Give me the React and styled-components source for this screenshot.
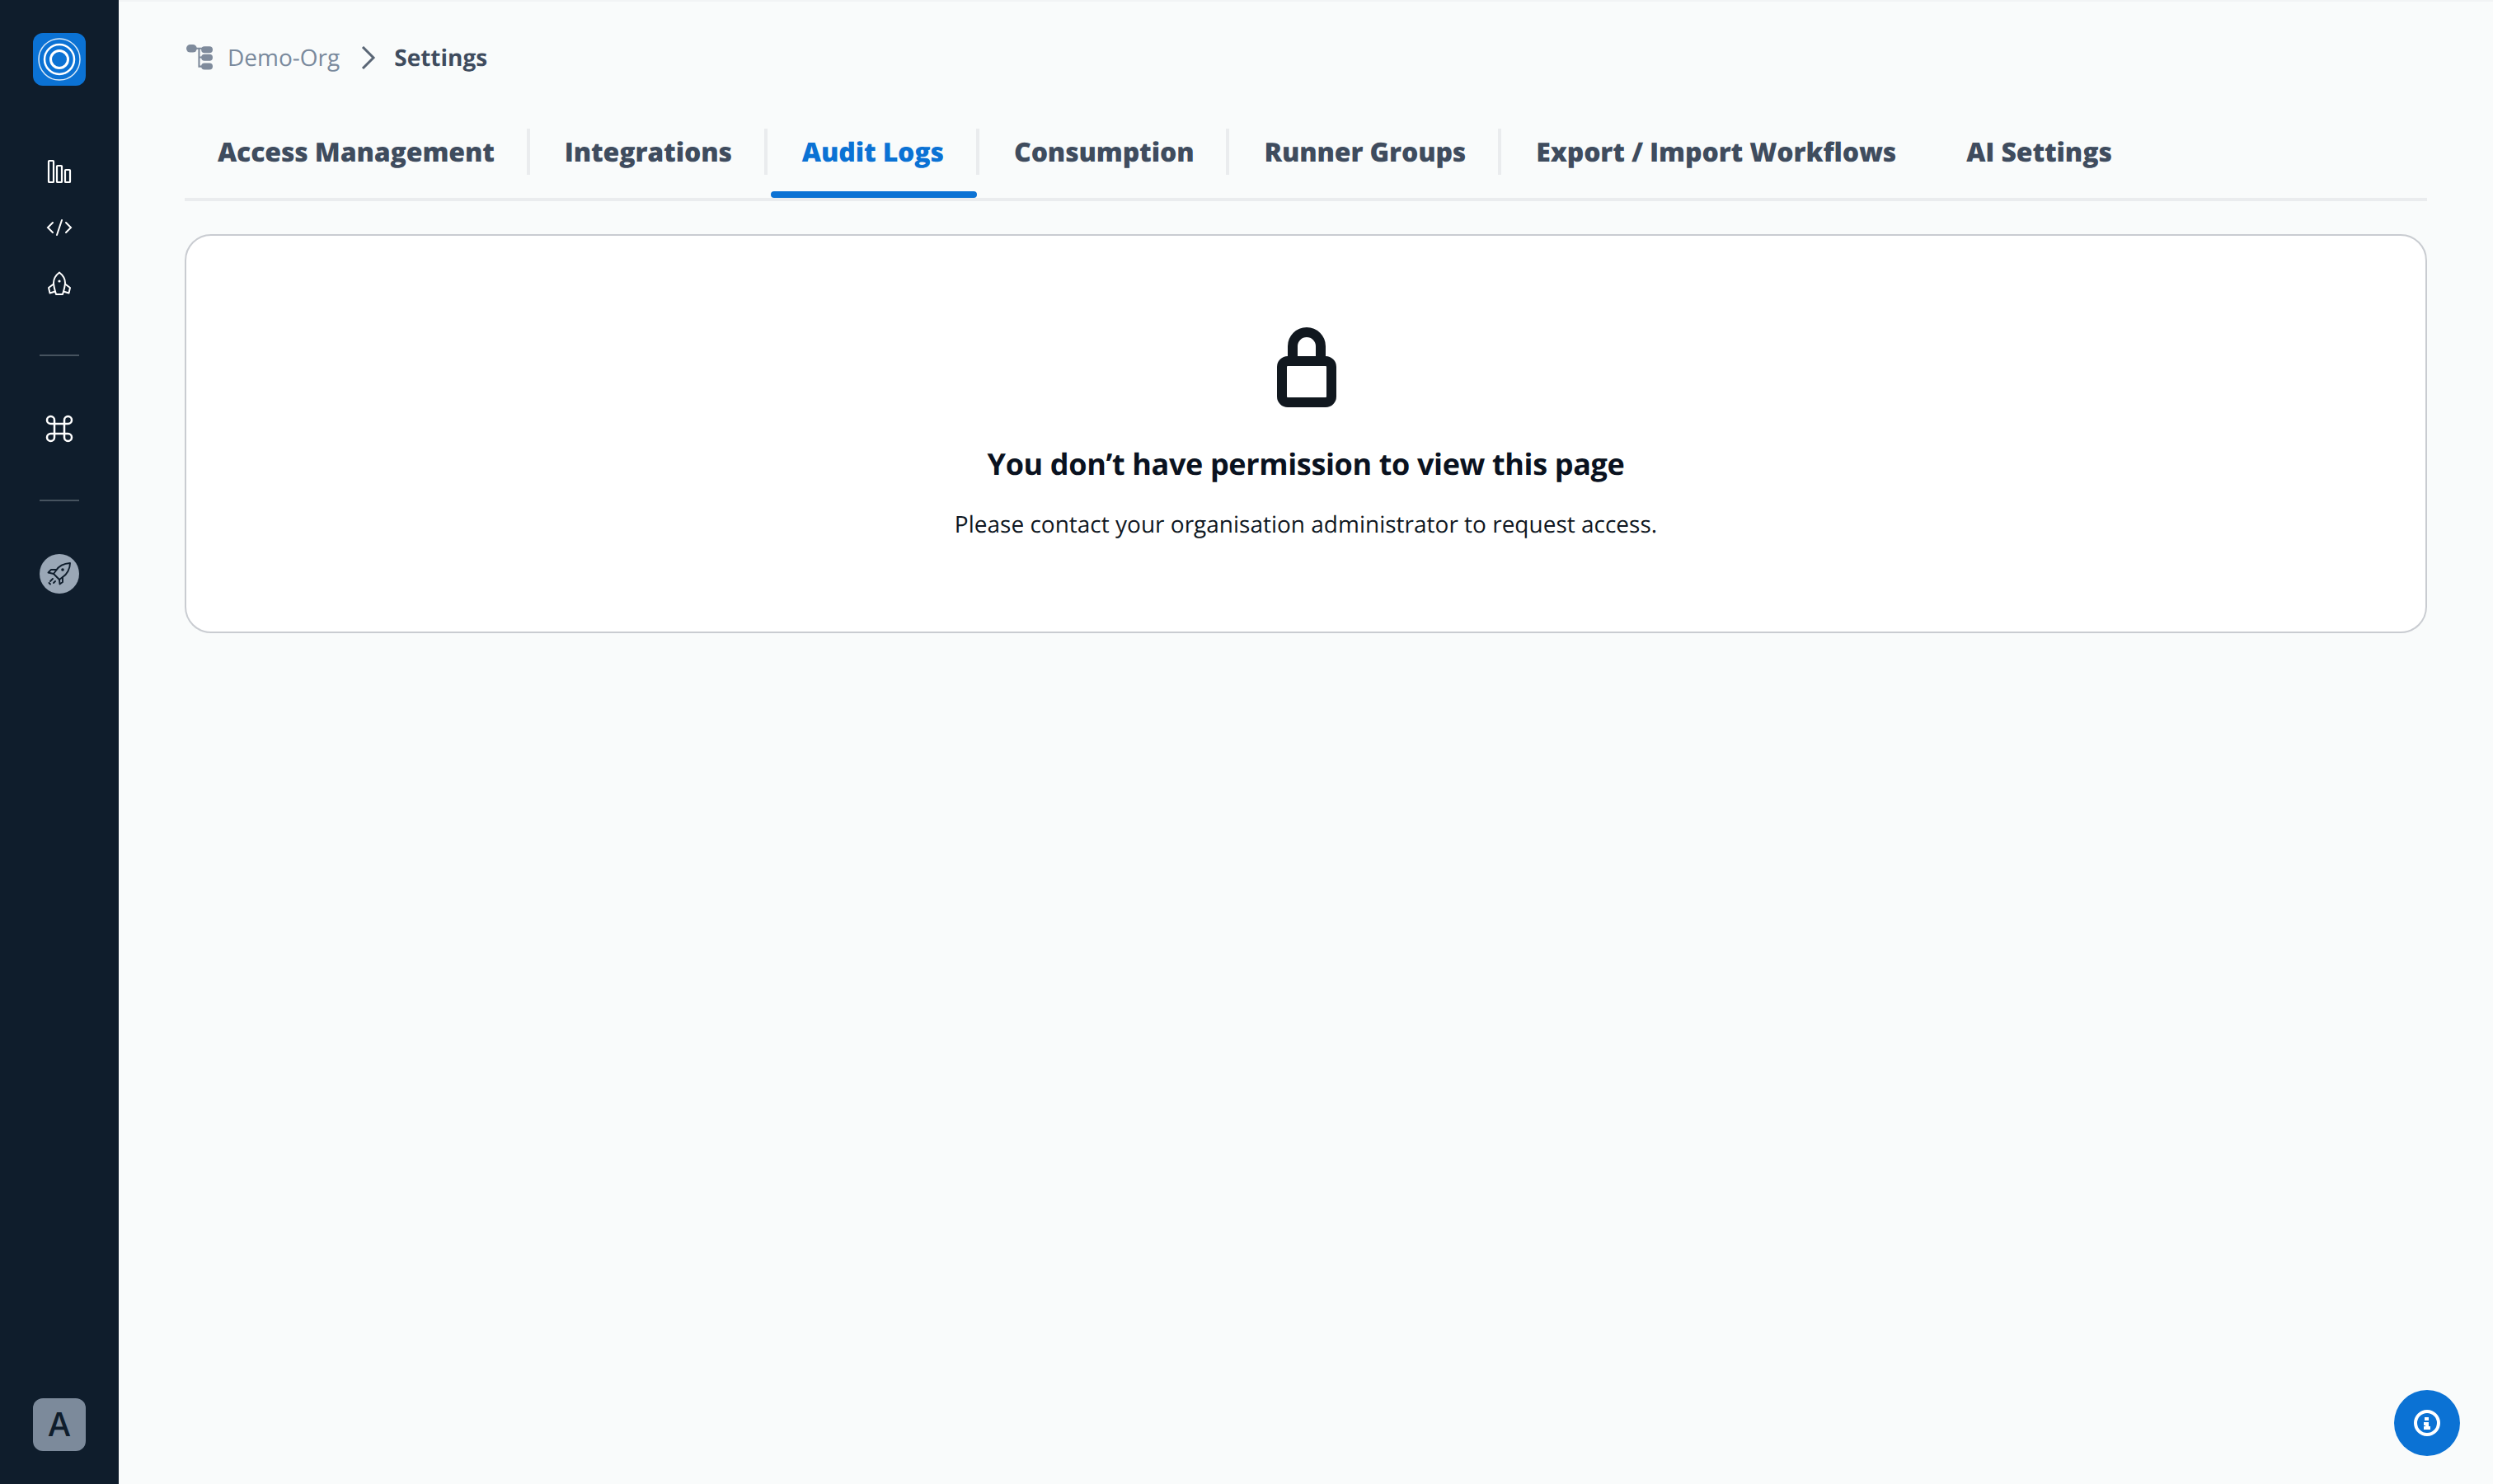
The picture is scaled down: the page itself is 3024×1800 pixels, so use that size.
import React from "react";
import styled, { createGlobalStyle } from "styled-components";

const Global = createGlobalStyle`
  html, body { margin: 0; padding: 0; height: 100%; background: #f9fbfb; }
  #root { height: 100%; }
  * { box-sizing: border-box; }
`;
const Shell = styled.div`
  display: flex; width: 3024px; height: 1800px; background: #f9fbfb;
  font-family: "Open Sans", sans-serif; overflow: hidden; position: relative;
  text-rendering: geometricPrecision; -webkit-font-smoothing: antialiased;
`;
const Sidebar = styled.aside`
  width: 144px; flex: none; background: #0f1d2c; display: flex; flex-direction: column; align-items: center;
  padding: 40px 0; 
`;
const Logo = styled.div`
  width: 64px; height: 64px; border-radius: 12px; background: #0b72d4; display: flex; align-items: center; justify-content: center;
`;
const NavGroup = styled.div`
  display: flex; flex-direction: column; align-items: center; margin-top: 86px; gap: 32px;
`;
const NavIcon = styled.div`
  width: 36px; height: 36px; display: flex; align-items: center; justify-content: center;
`;
const CommandIcon = styled(NavIcon)`
  margin-top: 70px;
`;
const Rule = styled.div`
  width: 48px; height: 2px; background: #46535f; margin-top: ${p => p.$top}px;
`;
const RocketBadge = styled.div`
  width: 48px; height: 48px; border-radius: 50%; background: #9aa7b6; display: flex; align-items: center; justify-content: center; margin-top: 64px;
`;
const Avatar = styled.div`
  width: 64px; height: 64px; margin-top: auto; border-radius: 12px; background: #7c8a9b; color: #0f1d2c;
  display: flex; align-items: center; justify-content: center; font: 500 40px/1 "Inter", sans-serif;
`;
const Main = styled.main`
  flex: 1; padding: 0 80px; border-top: 2px solid #f2f4f5; min-width: 0;
`;
const Crumbs = styled.nav`
  height: 136px; display: flex; align-items: center; font-size: 28px; padding-left: 2px;
`;
const CrumbLink = styled.span`
  color: #7a8a9d; margin-left: 18px;
`;
const CrumbNow = styled.span`
  color: #3f4c5e; font-weight: 700;
`;
const Chevron = styled.svg`
  margin: 0 22px 0 26px;
`;
const Tabs = styled.div`
  display: flex; height: 106px; border-bottom: 4px solid #eaecee; position: relative;
`;
const Tab = styled.div`
  position: relative; height: 102px; padding: 25px 43px 0 40px; font-size: 32px; line-height: 44px; font-weight: 800;
  letter-spacing: -0.15px;
  color: ${p => (p.$active ? "#0b72d4" : "#3f4c5e")}; white-space: nowrap;
  &:not(:first-child) { padding-left: 42px; }
  &::after {
    content: ""; display: ${p => (p.$last ? "none" : "block")}; position: absolute; right: 0; top: 18px; width: 4px; height: 56px; background: #eaecee;
  }
`;
const ActiveBar = styled.div`
  position: absolute; left: 4px; right: 3px; bottom: 0; height: 8px; border-radius: 4px; background: #0b72d4;
`;
const Card = styled.section`
  margin-top: 40px; height: 484px; background: #fff; border: 2px solid #c9ccd1; border-radius: 32px;
  display: flex; flex-direction: column; align-items: center; padding-top: 110px;
`;
const LockIcon = styled.svg`
  display: block; margin-left: 2px;
`;
const Title = styled.h1`
  margin: 44px 0 0; font-size: 36px; line-height: 50px; font-weight: 700; color: #0a1220; letter-spacing: -0.36px;
`;
const Body = styled.p`
  margin: 28px 0 0; font-size: 28px; line-height: 40px; font-weight: 400; color: #0f1722;
`;
const Help = styled.button`
  position: absolute; right: 40px; bottom: 34px; width: 80px; height: 80px; border-radius: 50%; background: #0b72d4; border: 0; padding: 0;
  display: flex; align-items: center; justify-content: center;
`;

const tabs = ["Access Management", "Integrations", "Audit Logs", "Consumption", "Runner Groups", "Export / Import Workflows", "AI Settings"];

export default function App() {
  return (
    <Shell>
      <Global />
      <Sidebar>
        <Logo>
          <svg width="54" height="54" viewBox="0 0 54 54" fill="none" stroke="#fff">
            <circle cx="27" cy="27" r="25" strokeWidth="1.5" opacity=".85" />
            <circle cx="27" cy="27" r="18" strokeWidth="2.5" />
            <circle cx="27" cy="27" r="10.5" strokeWidth="3" />
          </svg>
        </Logo>
        <NavGroup>
          <NavIcon>
            <svg width="30" height="30" viewBox="0 0 30 30" fill="none" stroke="#fff" strokeWidth="2.200">
              <rect x="2" y="2" width="6" height="26" rx=".8" />
              <rect x="12" y="8" width="6" height="20" rx=".8" />
              <rect x="22" y="13" width="6" height="15" rx=".8" />
            </svg>
          </NavIcon>
          <NavIcon>
            <svg width="32" height="22" viewBox="0 0 32 22" fill="none" stroke="#fff" strokeWidth="2" strokeLinecap="round">
              <path d="M8 5 2 11l6 6M24 5l6 6-6 6M19 2l-6 18" />
            </svg>
          </NavIcon>
          <NavIcon>
            <svg width="30" height="30" viewBox="0 0 30 30" fill="none" stroke="#fff" strokeWidth="2" strokeLinejoin="round">
              <path d="M15 1.500c-4.500 3.500-7 8-7 12.500 0 4 1.500 9 3 14h8c1.500-5 3-10 3-14 0-4.500-2.500-9-7-12.500z" />
              <path d="M8 15.500 2 20l1.500 6.500L10 24.500M22 15.500l6 4.500-1.500 6.500-6.500-2" />
              <circle cx="15" cy="12" r="1.600" fill="#fff" stroke="none" />
            </svg>
          </NavIcon>
        </NavGroup>
        <Rule $top={68} />
        <CommandIcon>
          <svg width="34" height="34" viewBox="0 0 34 34" fill="none" stroke="#fff" strokeWidth="2.500">
            <path d="M11 11h12v12H11zM11 11V6.500A4.500 4.500 0 1 0 6.500 11H11zM23 11V6.500A4.500 4.500 0 1 1 27.500 11H23zM11 23v4.500A4.500 4.500 0 1 1 6.500 23H11zM23 23v4.500a4.500 4.500 0 1 0 4.500-4.500H23z" />
          </svg>
        </CommandIcon>
        <Rule $top={68} />
        <RocketBadge>
          <svg width="30" height="30" viewBox="0 0 30 30" fill="none" stroke="#0f1d2c" strokeWidth="1.900" strokeLinejoin="round" strokeLinecap="round">
            <path d="M28 2C20 2.500 14 6 11 11l-3 4 7 7 4-3c5-3 9-10 9-17z" />
            <path d="M11 10H5l-3.500 3.500L8 15M19 19v6l-3.500 2.500L15 22" />
            <circle cx="19" cy="10" r="1.800" fill="#0f1d2c" stroke="none" />
            <path d="M7 21l-3 3M10 24l-2 2M2.500 26 4 27.500" />
          </svg>
        </RocketBadge>
        <Avatar>A</Avatar>
      </Sidebar>
      <Main>
        <Crumbs>
          <svg width="32" height="32" viewBox="0 0 30 30" fill="#7f8b9c">
            <rect x="0" y="0" width="12" height="9" rx="4.500" />
            <rect x="17" y="2" width="13" height="7.500" rx="3.700" />
            <rect x="17" y="11" width="13" height="7.500" rx="3.700" />
            <rect x="17" y="21" width="13" height="7.500" rx="3.700" />
            <path d="M9 4.500h10M14.500 4.500v20.500h4M14.500 14.500h4" fill="none" stroke="#7f8b9c" strokeWidth="2" />
          </svg>
          <CrumbLink>Demo-Org</CrumbLink>
          <Chevron width="18" height="28" viewBox="0 0 18 28" fill="none" stroke="#5a6675" strokeWidth="3">
            <path d="M2 1l13 13L2 27" />
          </Chevron>
          <CrumbNow>Settings</CrumbNow>
        </Crumbs>
        <Tabs>
          {tabs.map((t, i) => (
            <Tab key={t} $active={t === "Audit Logs"} $last={i >= 5}>
              {t}
              {t === "Audit Logs" && <ActiveBar />}
            </Tab>
          ))}
        </Tabs>
        <Card>
          <LockIcon width="72" height="98" viewBox="0 0 72 98" fill="none" stroke="#11181f" strokeWidth="12">
            <path d="M19 42V24a17 17 0 0 1 34 0v18" />
            <rect x="6" y="42" width="60" height="50" rx="7" />
          </LockIcon>
          <Title>You don’t have permission to view this page</Title>
          <Body>Please contact your organisation administrator to request access.</Body>
        </Card>
      </Main>
      <Help aria-label="Info">
        <svg width="32" height="32" viewBox="0 0 32 32" fill="none">
          <circle cx="16" cy="16" r="14" stroke="#fff" strokeWidth="4" />
          <path d="M13 9h5v4h-5zM12 15h6v5h2v4h-8v-4h2v-1h-2z" fill="#fff" />
        </svg>
      </Help>
    </Shell>
  );
}
